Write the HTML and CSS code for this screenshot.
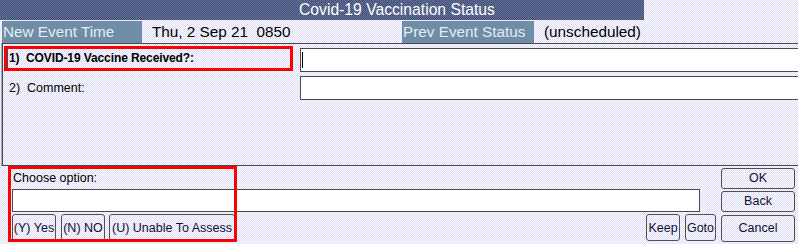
FILE: index.html
```html
<!DOCTYPE html>
<html>
<head>
<meta charset="utf-8">
<link rel="stylesheet" href="styles.css">
</head>
<body>
<div class="window">
  <div class="titlebar"><div class="title">Covid-19 Vaccination Status</div></div>
  <div class="eventrow">
    <div class="tag tag-time">New Event Time</div>
    <div class="val val-time">Thu, 2 Sep 21&nbsp; 0850</div>
    <div class="tag tag-prev">Prev Event Status</div>
    <div class="val">(unscheduled)</div>
  </div>
  <div class="questions">
    <div class="qrow q1">
      <div class="qlabel active">1)&nbsp; COVID-19 Vaccine Received?:</div>
      <div class="qinput"><span class="caret"></span></div>
    </div>
    <div class="qrow q2">
      <div class="qlabel">2)&nbsp; Comment:</div>
      <div class="qinput"></div>
    </div>
  </div>
  <div class="bottom">
    <div class="main">
      <div class="prompt">Choose option:</div>
      <div class="answer"></div>
      <div class="actions">
        <div class="options">
          <button class="btn opt opt-y">(Y) Yes</button>
          <button class="btn opt opt-n">(N) NO</button>
          <button class="btn opt opt-u">(U) Unable To Assess</button>
        </div>
        <div class="nav">
          <button class="btn keep">Keep</button>
          <button class="btn goto">Goto</button>
        </div>
      </div>
    </div>
    <div class="side">
      <button class="btn ok">OK</button>
      <button class="btn back">Back</button>
      <button class="btn cancel">Cancel</button>
    </div>
    <div class="highlight"></div>
  </div>
</div>
</body>
</html>
```
FILE: styles.css
```css
html, body {
  margin: 0;
  padding: 0;
}
body {
  width: 798px;
  height: 244px;
  overflow: hidden;
  font-family: "Liberation Sans", Arial, sans-serif;
  color: #000;
  background: repeating-conic-gradient(#dadaf6 0 25%, #ffffff 0 50%) 0 0 / 2px 2px;
}
.window {
  width: 798px;
  height: 244px;
  position: relative;
}
.titlebar {
  width: 644px;
  height: 20px;
  background: repeating-conic-gradient(#3a4a7a 0 25%, #6c7894 0 50%) 0 0 / 2px 2px;
}
.title {
  padding-left: 299px;
  line-height: 20px;
  font-size: 15.7px;
  color: #ffffff;
  white-space: nowrap;
}
.eventrow {
  display: flex;
  height: 22px;
  margin-top: 1px;
  font-size: 15.3px;
  line-height: 22px;
  white-space: nowrap;
}
.tag {
  background: #6f8da7;
  color: #e6ecf4;
  padding-left: 1px;
  box-sizing: border-box;
}
.tag-time {
  margin-left: 2px;
  width: 140px;
}
.val {
  padding-left: 10px;
  box-sizing: border-box;
  color: #000;
}
.val-time {
  width: 260px;
}
.tag-prev {
  width: 132px;
}
.questions {
  margin-left: 2px;
  height: 121px;
  border-top: 1px solid #4a4a4a;
  border-left: 1px solid #4a4a4a;
  border-bottom: 1px solid #4a4a4a;
  box-shadow: -1px 0 0 #a8a8b8;
}
.qrow {
  display: flex;
  align-items: flex-start;
  font-size: 12.5px;
  white-space: nowrap;
}
.q1 {
  height: 28px;
}
.qlabel {
  box-sizing: border-box;
}
.active {
  margin-left: 1px;
  margin-top: 2px;
  width: 289px;
  height: 25px;
  border: 3px solid #ff0000;
  padding-left: 2px;
  line-height: 19px;
  font-size: 12px;
  font-weight: bold;
  letter-spacing: -0.1px;
  box-shadow: inset 1px 0 0 #3a4a7a;
}
.q2 .qlabel {
  width: 297px;
  padding-left: 6px;
  margin-top: 4px;
  height: 24px;
  line-height: 25px;
}
.qinput {
  box-sizing: border-box;
  margin-top: 4px;
  height: 24px;
  flex: 1;
  margin-right: -10px;
  background: #ffffff;
  border: 1px solid #4a4a4a;
  position: relative;
}
.q1 .qinput {
  margin-left: 7px;
}
.caret {
  position: absolute;
  left: 1px;
  top: 3px;
  width: 1px;
  height: 16px;
  background: #000;
}
.bottom {
  position: relative;
  display: flex;
  padding-left: 12px;
  height: 78px;
}
.main {
  width: 704px;
  display: flex;
  flex-direction: column;
}
.prompt {
  height: 23px;
  line-height: 25px;
  font-size: 12.5px;
  padding-left: 1px;
}
.answer {
  box-sizing: border-box;
  width: 688px;
  height: 23px;
  background: #ffffff;
  border: 1px solid #4a4a4a;
}
.actions {
  display: flex;
  justify-content: space-between;
  margin-top: 2px;
}
.options, .nav {
  display: flex;
}
.btn {
  box-sizing: border-box;
  margin: 0;
  padding: 0;
  background: transparent;
  border: 1px solid #505050;
  border-radius: 3px;
  font-family: "Liberation Sans", Arial, sans-serif;
  font-size: 12.5px;
  color: #101030;
  height: 27px;
  line-height: 25px;
  text-align: center;
  white-space: nowrap;
}
.opt {
  padding-top: 2px;
  line-height: 23px;
}
.opt-y { width: 44px; }
.opt-n { width: 44px; margin-left: 5px; }
.opt-u { width: 126px; margin-left: 4px; }
.keep { width: 34px; padding-top: 2px; line-height: 23px; }
.goto { width: 31px; margin-left: 5px; padding-top: 2px; line-height: 23px; }
.side {
  margin-left: 5px;
  width: 74px;
  display: flex;
  flex-direction: column;
}
.ok {
  margin-top: 2px;
  height: 21px;
  line-height: 19px;
}
.back {
  margin-top: 2px;
  height: 21px;
  line-height: 19px;
}
.cancel {
  margin-top: 3px;
  height: 27px;
  line-height: 25px;
}
.highlight {
  position: absolute;
  left: 8px;
  top: 0;
  width: 229px;
  height: 76px;
  box-sizing: border-box;
  border: 3px solid #ff0000;
  pointer-events: none;
}
```
